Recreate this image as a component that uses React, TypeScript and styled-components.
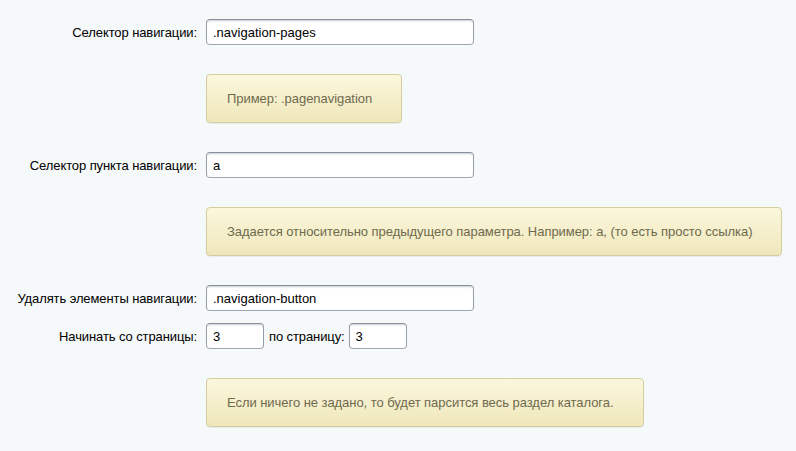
import React from 'react';
import styled, { createGlobalStyle } from 'styled-components'

const GlobalStyle = createGlobalStyle`
    html, body {
        margin: 0;
        padding: 0;
        background: #f5f9f9;
    }
    body {
        font-family: "Liberation Sans", Arial, sans-serif;
        font-size: 13px;
        color: #000;
    }
`

const Form = styled.div`
    display: flex;
    flex-direction: column;
    padding-top: 19px;
    width: 796px;
    height: 451px;
    box-sizing: border-box;
`

const Row = styled.div<{ $gap: number }>`
    display: flex;
    align-items: center;
    margin-bottom: ${p => p.$gap}px;
`

const Label = styled.div`
    width: 206px;
    padding-right: 9px;
    box-sizing: border-box;
    text-align: right;
    flex-shrink: 0;
    letter-spacing: -0.1px;
`

const Field = styled.div`
    display: flex;
    align-items: center;
`

const Input = styled.input<{ $width: number }>`
    width: ${p => p.$width}px;
    height: 26px;
    box-sizing: border-box;
    padding: 0 6px;
    font-family: "Liberation Sans", Arial, sans-serif;
    font-size: 13px;
    color: #000;
    background: #fff;
    border: 1px solid;
    border-color: #87919c #959ea9 #9ea7b1 #959ea9;
    border-radius: 4px;
    box-shadow: 0 1px 0 0 rgba(255, 255, 255, 0.3), inset 0 2px 2px -1px rgba(180, 188, 191, 0.7);
    outline: none;
`

const InlineLabel = styled.span`
    margin: 0 4px 0 5px;
    letter-spacing: -0.1px;
`

const Hint = styled.div`
    display: inline-block;
    box-sizing: border-box;
    padding: 15px 29px 15px 20px;
    line-height: 17px;
    color: #6f6a4d;
    background: linear-gradient(to bottom, #fbf7dd, #efe7bb);
    border: 1px solid #d6cd9e;
    border-radius: 4px;
    box-shadow: 0 1px 1px rgba(0, 0, 0, 0.06);
    white-space: nowrap;
    letter-spacing: -0.05px;
`

function App() {
    return (
        <>
            <GlobalStyle />
            <Form>
                <Row $gap={29}>
                    <Label>Селектор навигации:</Label>
                    <Field><Input $width={268} defaultValue=".navigation-pages" /></Field>
                </Row>
                <Row $gap={29}>
                    <Label />
                    <Hint>Пример: .pagenavigation</Hint>
                </Row>
                <Row $gap={29}>
                    <Label>Селектор пункта навигации:</Label>
                    <Field><Input $width={268} defaultValue="a" /></Field>
                </Row>
                <Row $gap={29}>
                    <Label />
                    <Hint>Задается относительно предыдущего параметра. Например: a, (то есть просто ссылка)</Hint>
                </Row>
                <Row $gap={12}>
                    <Label>Удалять элементы навигации:</Label>
                    <Field><Input $width={268} defaultValue=".navigation-button" /></Field>
                </Row>
                <Row $gap={29}>
                    <Label>Начинать со страницы:</Label>
                    <Field>
                        <Input $width={58} defaultValue="3" />
                        <InlineLabel>по страницу:</InlineLabel>
                        <Input $width={58} defaultValue="3" />
                    </Field>
                </Row>
                <Row $gap={0}>
                    <Label />
                    <Hint>Если ничего не задано, то будет парсится весь раздел каталога.</Hint>
                </Row>
            </Form>
        </>
    );
}

export default App;
